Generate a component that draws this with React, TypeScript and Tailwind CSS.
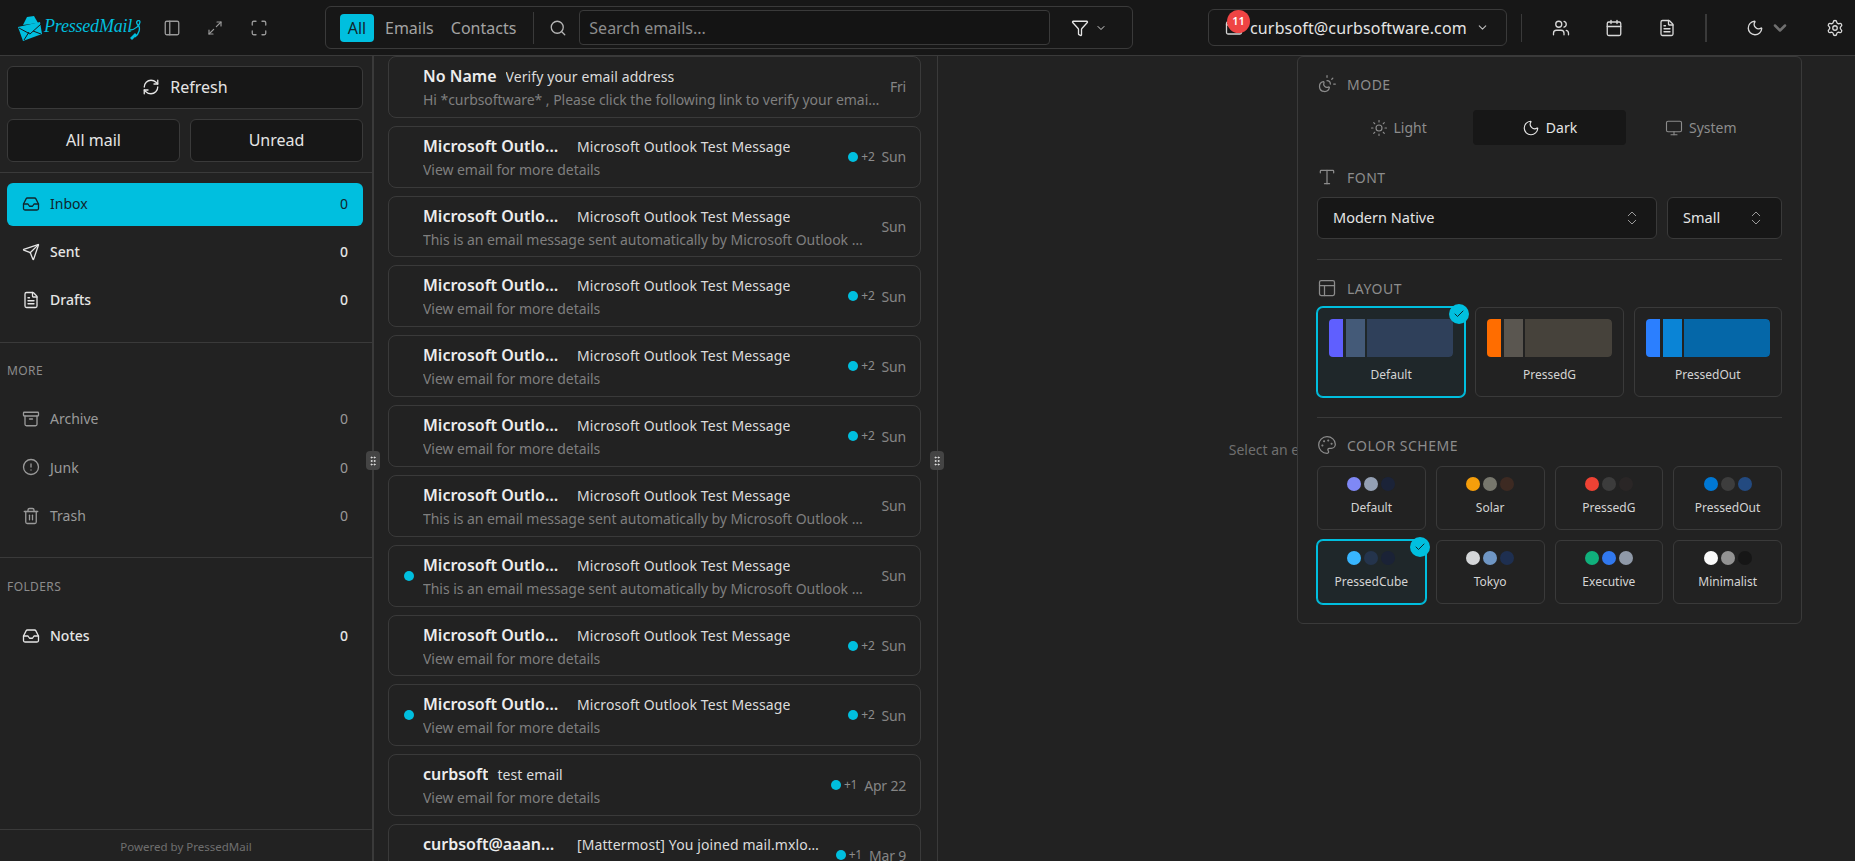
import type { ReactNode } from "react";
import {
  Archive,
  Calendar,
  Check,
  ChevronDown,
  ChevronsUpDown,
  CircleAlert,
  FileText,
  Funnel,
  GripVertical,
  Inbox,
  Mail,
  Maximize,
  Maximize2,
  Monitor,
  Moon,
  Palette,
  PanelLeft,
  PanelsTopLeft,
  RefreshCw,
  Search,
  Send,
  Settings,
  Sun,
  SunMoon,
  Trash2,
  Type,
  Users,
} from "lucide-react";

const MS_NAME = "Microsoft Outlook T";
const MS_SUBJECT = "Microsoft Outlook Test Message";
const VIEW = "View email for more details";
const AUTO = "This is an email message sent automatically by Microsoft Outlook while testing the settings for your account.";

const emails = [
  { name: "No Name", subject: "Verify your email address", snippet: "Hi *curbsoftware* , Please click the following link to verify your email address and continue", time: "Fri" },
  { name: MS_NAME, subject: MS_SUBJECT, snippet: VIEW, time: "Sun", extra: "+2" },
  { name: MS_NAME, subject: MS_SUBJECT, snippet: AUTO, time: "Sun" },
  { name: MS_NAME, subject: MS_SUBJECT, snippet: VIEW, time: "Sun", extra: "+2" },
  { name: MS_NAME, subject: MS_SUBJECT, snippet: VIEW, time: "Sun", extra: "+2" },
  { name: MS_NAME, subject: MS_SUBJECT, snippet: VIEW, time: "Sun", extra: "+2" },
  { name: MS_NAME, subject: MS_SUBJECT, snippet: AUTO, time: "Sun" },
  { name: MS_NAME, subject: MS_SUBJECT, snippet: AUTO, time: "Sun", unread: true },
  { name: MS_NAME, subject: MS_SUBJECT, snippet: VIEW, time: "Sun", extra: "+2" },
  { name: MS_NAME, subject: MS_SUBJECT, snippet: VIEW, time: "Sun", extra: "+2", unread: true },
  { name: "curbsoft", subject: "test email", snippet: VIEW, time: "Apr 22", extra: "+1" },
  { name: "curbsoft@aaanetwork", subject: "[Mattermost] You joined mail.mxlogic.example team", snippet: VIEW, time: "Mar 9", extra: "+1", wide: true },
];

const layouts = [
  { name: "Default", a: "bg-[#5f5fff]", b: "bg-[#445a78]", c: "bg-[#2f405a]", active: true },
  { name: "PressedG", a: "bg-[#ff6d00]", b: "bg-[#5a5650]", c: "bg-[#46423b]" },
  { name: "PressedOut", a: "bg-[#2b7fff]", b: "bg-[#0a84d6]", c: "bg-[#0567a8]" },
];

const schemes = [
  { name: "Default", dots: ["bg-[#7f88f5]", "bg-[#94a0b4]", "bg-[#1b2338]"] },
  { name: "Solar", dots: ["bg-[#f59e0b]", "bg-[#77776d]", "bg-[#3d2a22]"] },
  { name: "PressedG", dots: ["bg-[#ef4234]", "bg-[#3c3c3c]", "bg-[#2a2626]"] },
  { name: "PressedOut", dots: ["bg-[#0078d4]", "bg-[#3d3d3d]", "bg-[#234a80]"] },
  { name: "PressedCube", dots: ["bg-[#38b6ff]", "bg-[#24344c]", "bg-[#1a2236]"], active: true },
  { name: "Tokyo", dots: ["bg-[#d4d6d8]", "bg-[#6f96c4]", "bg-[#1e2f50]"] },
  { name: "Executive", dots: ["bg-[#10b07c]", "bg-[#3178ee]", "bg-[#8f99a8]"] },
  { name: "Minimalist", dots: ["bg-[#fafafa]", "bg-[#929292]", "bg-[#161616]"] },
];

function Logo() {
  return (
    <div className="flex items-center w-[122px] h-[28px] ml-[17px] text-[#00bfdf]">
      <svg width="26" height="28" viewBox="0 0 26 28" className="shrink-0">
        <path d="M6 11 L10 3 L17 2 L21 9 Z" fill="currentColor" />
        <path d="M1 13 L23 8 L25 20 L6 27 Z" fill="currentColor" />
        <path d="M2 14 L13 20 L24 10 M7 26 L12 18 M24 20 L16 17" fill="none" stroke="#171717" strokeWidth="1" />
      </svg>
      <span className="relative ml-[1px] -top-[2px] font-['Liberation_Serif',serif] italic text-[18px] tracking-[-0.2px] leading-none">
        PressedMail
      </span>
      <svg width="12" height="26" viewBox="0 0 12 26" className="shrink-0 -ml-[2px] mt-[2px]">
        <path d="M0 14 C5 14 10 9 10 6 C10 3 4 5 8 9 C11 12 9 18 5 21" fill="none" stroke="currentColor" strokeWidth="1.3" />
        <path d="M7 19 L2 24 L0 22 L5 17 Z" fill="currentColor" />
      </svg>
    </div>
  );
}

function Header() {
  return (
    <header className="h-[56px] shrink-0 bg-[#171717] border-b border-[#3a3a3a] flex items-center">
      <Logo />
      <PanelLeft className="ml-[24px] w-[18px] h-[18px] text-[#9a9a9a]" strokeWidth={1.75} />
      <Maximize2 className="ml-[26px] w-[16px] h-[16px] text-[#9a9a9a]" strokeWidth={1.75} />
      <Maximize className="ml-[27px] w-[18px] h-[18px] text-[#9a9a9a]" strokeWidth={1.75} />

      <div className="ml-[57px] w-[808px] h-[43px] rounded-md border border-[#3a3a3a] flex items-center pl-[14px]">
        <span className="w-[34px] h-[28px] rounded bg-[#00bfdf] text-[#10262c] text-[16px] flex items-center justify-center">All</span>
        <span className="ml-[11px] text-[16px] text-[#a3a3a3]">Emails</span>
        <span className="ml-[17px] text-[16px] text-[#a3a3a3]">Contacts</span>
        <div className="ml-[17px] w-px h-[32px] bg-[#3a3a3a]" />
        <Search className="ml-[15px] w-[18px] h-[18px] text-[#b5b5b5]" strokeWidth={1.75} />
        <div className="ml-[12px] w-[471px] h-[35px] rounded border border-[#3a3a3a] bg-[#141414] flex items-center pl-[9px] text-[16px] text-[#8d8d8d]">
          Search emails...
        </div>
        <Funnel className="ml-[21px] w-[18px] h-[18px] text-[#e5e5e5]" strokeWidth={1.75} />
        <ChevronDown className="ml-[6px] w-[12px] h-[12px] text-[#d4d4d4]" strokeWidth={2} />
      </div>

      <div className="relative ml-[75px] w-[299px] h-[37px] rounded-md border border-[#3a3a3a] flex items-center pl-[16px]">
        <Mail className="w-[18px] h-[18px] text-[#d4d4d4]" strokeWidth={1.75} />
        <span className="absolute left-[18px] top-[0px] w-[23px] h-[23px] rounded-full bg-[#ef4444] text-white text-[11px] font-semibold flex items-center justify-center">11</span>
        <span className="ml-[7px] text-[16px] tracking-[0.15px] text-[#e5e5e5] whitespace-nowrap">curbsoft@curbsoftware.com</span>
        <ChevronDown className="absolute right-[17px] w-[13px] h-[13px] text-[#bdbdbd]" strokeWidth={2} />
      </div>

      <div className="ml-[14px] w-px h-[28px] bg-[#3a3a3a]" />
      <Users className="ml-[30px] w-[18px] h-[18px] text-[#d9d9d9]" strokeWidth={1.75} />
      <Calendar className="ml-[35px] w-[18px] h-[18px] text-[#d9d9d9]" strokeWidth={1.75} />
      <FileText className="ml-[35px] w-[18px] h-[18px] text-[#d9d9d9]" strokeWidth={1.75} />
      <div className="ml-[29px] w-[2px] h-[28px] bg-[#3a3a3a]" />
      <Moon className="ml-[39px] w-[18px] h-[18px] text-[#d9d9d9]" strokeWidth={1.75} />
      <ChevronDown className="ml-[6px] w-[20px] h-[20px] text-[#6f6f6f]" strokeWidth={3} />
      <Settings className="ml-[36px] w-[18px] h-[18px] text-[#d9d9d9]" strokeWidth={1.75} />
    </header>
  );
}

function NavRow({ icon, label, active, muted }: { icon: ReactNode; label: string; active?: boolean; muted?: boolean }) {
  const tone = active
    ? "bg-[#00bfdf] text-[#10262c]"
    : muted
      ? "text-[#9a9a9a]"
      : "text-[#e5e5e5]";
  return (
    <div className={`h-[43px] rounded-md flex items-center pl-[15px] pr-[15px] pb-[2px] text-[14px] ${active || muted ? "" : "font-medium"} ${tone}`}>
      {icon}
      <span className="ml-[10px]">{label}</span>
      <span className="ml-auto">0</span>
    </div>
  );
}

function Handle({ className }: { className: string }) {
  return (
    <div className={`absolute top-[395px] z-10 w-[14px] h-[19px] rounded-sm bg-[#444444] flex items-center justify-center text-[#e5e5e5] ${className}`}>
      <GripVertical className="w-[12px] h-[12px]" strokeWidth={2} />
    </div>
  );
}

function Sidebar() {
  const iconCls = "w-[18px] h-[18px]";
  return (
    <aside className="relative w-[374px] shrink-0 border-r-2 border-[#3a3a3a] flex flex-col">
      <div className="pt-[10px] pb-[10px] pl-[7px] pr-[9px] flex flex-col gap-[10px] border-b border-[#3a3a3a]">
        <button className="h-[43px] pb-[2px] rounded-md border border-[#3a3a3a] bg-[#171717] text-[#e5e5e5] text-[16px] flex items-center justify-center gap-[10px]">
          <RefreshCw className="w-[18px] h-[18px]" strokeWidth={1.75} />
          Refresh
        </button>
        <div className="flex gap-[10px]">
          <button className="flex-1 h-[43px] pb-[2px] rounded-md border border-[#3a3a3a] bg-[#171717] text-[#e5e5e5] text-[16px]">All mail</button>
          <button className="flex-1 h-[43px] pb-[2px] rounded-md border border-[#3a3a3a] bg-[#171717] text-[#e5e5e5] text-[16px]">Unread</button>
        </div>
      </div>

      <div className="pt-[10px] pb-[20px] pl-[7px] pr-[9px] flex flex-col gap-[5px] border-b border-[#3a3a3a]">
        <NavRow active icon={<Inbox className={iconCls} strokeWidth={1.75} />} label="Inbox" />
        <NavRow icon={<Send className={iconCls} strokeWidth={1.75} />} label="Sent" />
        <NavRow icon={<FileText className={iconCls} strokeWidth={1.75} />} label="Drafts" />
      </div>

      <div className="pt-[20px] pb-[19px] pl-[7px] pr-[9px] border-b border-[#3a3a3a]">
        <div className="h-[16px] text-[12px] leading-[16px] tracking-[0.4px] text-[#8c8c8c]">MORE</div>
        <div className="mt-[19px] flex flex-col gap-[5.5px]">
          <NavRow muted icon={<Archive className={iconCls} strokeWidth={1.75} />} label="Archive" />
          <NavRow muted icon={<CircleAlert className={iconCls} strokeWidth={1.75} />} label="Junk" />
          <NavRow muted icon={<Trash2 className={iconCls} strokeWidth={1.75} />} label="Trash" />
        </div>
      </div>

      <div className="pt-[21px] pl-[7px] pr-[9px]">
        <div className="h-[16px] text-[12px] leading-[16px] tracking-[0.4px] text-[#8c8c8c]">FOLDERS</div>
        <div className="mt-[20px]">
          <NavRow icon={<Inbox className={iconCls} strokeWidth={1.75} />} label="Notes" />
        </div>
      </div>

      <div className="mt-auto h-[32px] pt-[2px] border-t border-[#3a3a3a] flex items-center justify-center text-[11.5px] text-[#6f6f6f]">
        Powered by PressedMail
      </div>

      <Handle className="-right-[8px]" />
    </aside>
  );
}

function EmailCard({ email }: { email: (typeof emails)[number] }) {
  const longName = email.name.length > 10;
  const nameWidth = email.wide ? "w-[137px] shrink-0" : longName ? "w-[143px] shrink-0" : "";
  const subjectGap = email.wide ? "ml-[17px]" : longName ? "ml-[11px]" : "ml-[9px]";
  return (
    <div className="relative h-[61.83px] shrink-0 rounded-lg border border-[#3a3a3a] flex items-center pl-[34px] pr-[14px]">
      {email.unread && <span className="absolute left-[15px] top-[25px] w-[10px] h-[10px] rounded-full bg-[#00bfdf]" />}
      <div className="min-w-0 flex-1">
        <div className="flex items-baseline h-[24px]">
          <span className={`font-semibold text-[16px] text-[#ededed] truncate ${nameWidth}`}>{email.name}</span>
          <span className={`text-[14px] tracking-[0.1px] text-[#dcdcdc] truncate ${subjectGap} ${email.wide ? "max-w-[242px]" : ""}`}>{email.subject}</span>
        </div>
        <div className="mt-[2px] text-[14px] tracking-[-0.05px] leading-[20px] text-[#7f7f7f] truncate">{email.snippet}</div>
      </div>
      <div className="ml-[10px] shrink-0 flex items-center text-[14px] tracking-[-0.2px] text-[#858585]">
        {email.extra && (
          <>
            <span className="w-[10px] h-[10px] rounded-full bg-[#00bfdf]" />
            <span className="ml-[3px] mr-[7px] text-[12px] text-[#8c8c8c]">{email.extra}</span>
          </>
        )}
        {email.time}
      </div>
    </div>
  );
}

function EmailList() {
  return (
    <section className="relative w-[564px] shrink-0 border-r border-[#3a3a3a] pl-[14px] pr-[16px] flex flex-col gap-[8px] overflow-hidden">
      {emails.map((email, i) => (
        <EmailCard key={i} email={email} />
      ))}
    </section>
  );
}

function SectionTitle({ icon, children }: { icon: ReactNode; children: ReactNode }) {
  return (
    <div className="h-[20px] flex items-center gap-[10px] text-[#8c8c8c] text-[14px] tracking-[0.5px]">
      {icon}
      {children}
    </div>
  );
}

function ActiveTick() {
  return (
    <span className="absolute -top-[4px] -right-[5px] w-[20px] h-[20px] rounded-full bg-[#00bfdf] flex items-center justify-center text-[#10262c]">
      <Check className="w-[12px] h-[12px]" strokeWidth={2} />
    </span>
  );
}

function AppearancePanel() {
  const titleIcon = "w-[20px] h-[20px]";
  return (
    <div className="absolute left-[1297px] top-[56px] z-20 w-[505px] h-[568px] rounded-md border border-[#3a3a3a] bg-[#222222] pt-[17px] px-[19px] flex flex-col">
      <SectionTitle icon={<SunMoon className={titleIcon} strokeWidth={1.5} />}>MODE</SectionTitle>
      <div className="mt-[16px] grid grid-cols-3 gap-[4px] text-[14px]">
        <div className="h-[35px] pl-[10px] flex items-center justify-center gap-[6px] text-[#8c8c8c]">
          <Sun className="w-[18px] h-[18px]" strokeWidth={1.5} /> Light
        </div>
        <div className="h-[35px] rounded bg-[#171717] flex items-center justify-center gap-[6px] text-[#e5e5e5]">
          <Moon className="w-[18px] h-[18px]" strokeWidth={1.5} /> Dark
        </div>
        <div className="h-[35px] pr-[10px] flex items-center justify-center gap-[6px] text-[#8c8c8c]">
          <Monitor className="w-[18px] h-[18px]" strokeWidth={1.5} /> System
        </div>
      </div>

      <div className="mt-[22px]">
        <SectionTitle icon={<Type className={titleIcon} strokeWidth={1.5} />}>FONT</SectionTitle>
      </div>
      <div className="mt-[10px] flex gap-[10px] text-[14.5px] text-[#e5e5e5]">
        <div className="w-[340px] h-[42px] rounded-md border border-[#3a3a3a] bg-[#171717] flex items-center justify-between pl-[15px] pr-[15px]">
          Modern Native
          <ChevronsUpDown className="w-[18px] h-[18px] text-[#a3a3a3]" strokeWidth={1.25} />
        </div>
        <div className="flex-1 h-[42px] rounded-md border border-[#3a3a3a] bg-[#171717] flex items-center justify-between pl-[15px] pr-[16px]">
          Small
          <ChevronsUpDown className="w-[18px] h-[18px] text-[#a3a3a3]" strokeWidth={1.25} />
        </div>
      </div>
      <div className="mt-[20px] h-px bg-[#3a3a3a]" />

      <div className="mt-[18px]">
        <SectionTitle icon={<PanelsTopLeft className={titleIcon} strokeWidth={1.5} />}>LAYOUT</SectionTitle>
      </div>
      <div className="mt-[9px] grid grid-cols-3 gap-[10px]">
        {layouts.map((l) => (
          <div
            key={l.name}
            className={`relative h-[90px] rounded-md border px-[11px] pt-[11px] flex flex-col ${l.active ? "border-[#00bfdf] ring-1 ring-[#00bfdf] bg-[#1f272a]" : "border-[#3a3a3a]"}`}
          >
            <div className="h-[38px] rounded flex overflow-hidden">
              <div className={`w-[14px] ${l.a}`} />
              <div className={`ml-[3px] w-[19px] ${l.b}`} />
              <div className={`ml-[2px] flex-1 rounded-r ${l.c}`} />
            </div>
            <div className="mt-[10px] text-center text-[12px] leading-[16px] text-[#d4d4d4]">{l.name}</div>
            {l.active && <ActiveTick />}
          </div>
        ))}
      </div>
      <div className="mt-[20px] h-px bg-[#3a3a3a]" />

      <div className="mt-[17px]">
        <SectionTitle icon={<Palette className={titleIcon} strokeWidth={1.5} />}>COLOR SCHEME</SectionTitle>
      </div>
      <div className="mt-[11px] grid grid-cols-4 gap-[10px]">
        {schemes.map((s) => (
          <div
            key={s.name}
            className={`relative h-[64px] rounded-md border flex flex-col items-center pt-[10px] ${s.active ? "border-[#00bfdf] ring-1 ring-[#00bfdf] bg-[#1f272a]" : "border-[#3a3a3a]"}`}
          >
            <div className="flex gap-[3px]">
              {s.dots.map((d, i) => (
                <span key={i} className={`w-[14px] h-[14px] rounded-full ${d}`} />
              ))}
            </div>
            <div className="mt-[9px] text-[12px] leading-[16px] text-[#d4d4d4]">{s.name}</div>
            {s.active && <ActiveTick />}
          </div>
        ))}
      </div>
    </div>
  );
}

export default function App() {
  return (
    <div className="relative h-screen overflow-hidden bg-[#222222] flex flex-col font-['Noto_Sans',sans-serif]">
      <Header />
      <div className="flex-1 min-h-0 flex">
        <Sidebar />
        <EmailList />
        <main className="relative flex-1 flex items-center justify-center text-[14px] text-[#6f6f6f]">
          <Handle className="-left-[8px]" />
          <span className="relative -top-[9px]">Select an email from the list to view its details here.</span>
        </main>
      </div>
      <AppearancePanel />
    </div>
  );
}
